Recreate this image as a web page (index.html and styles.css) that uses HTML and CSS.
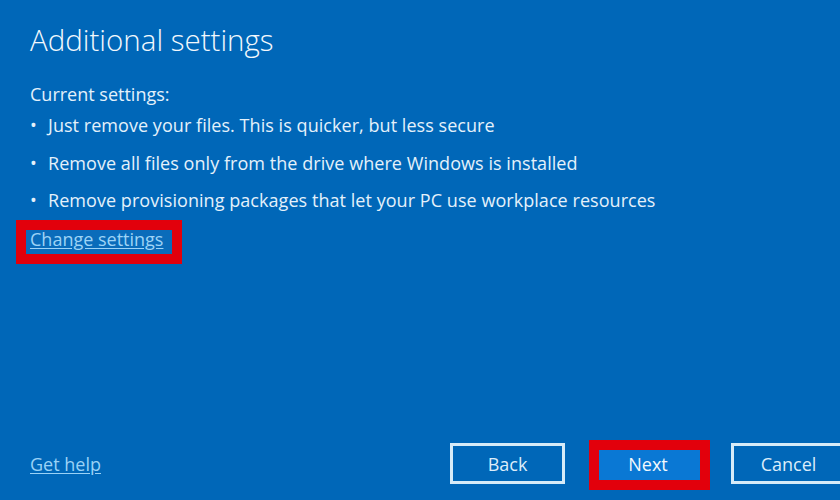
FILE: index.html
```html
<!DOCTYPE html>
<html lang="en">
<head>
<meta charset="utf-8">
<title>Additional settings</title>
<link rel="stylesheet" href="styles.css">
</head>
<body>
<div class="page">
  <h1 class="title">Additional settings</h1>
  <p class="label">Current settings:</p>
  <ul class="list">
    <li>Just remove your files. This is quicker, but less secure</li>
    <li>Remove all files only from the drive where Windows is installed</li>
    <li>Remove provisioning packages that let your PC use workplace resources</li>
  </ul>
  <div class="change-row">
    <a class="link change" href="#">Change settings<span class="mark mark-change"></span></a>
  </div>
  <div class="footer">
    <a class="link help" href="#">Get help</a>
    <div class="buttons">
      <button class="btn">Back</button>
      <button class="btn primary">Next<span class="mark mark-next"></span></button>
      <button class="btn">Cancel</button>
    </div>
  </div>
</div>
</body>
</html>
```

FILE: styles.css
```css
html, body {
  margin: 0;
  padding: 0;
}
body {
  width: 840px;
  height: 500px;
  overflow: hidden;
  background: #0067b8;
  font-family: "Open Sans", "Noto Sans", sans-serif;
  color: #e4f1fb;
}
.page {
  box-sizing: border-box;
  height: 500px;
  padding: 20px 0 16px 30px;
  display: flex;
  flex-direction: column;
}
.title {
  margin: 0;
  font-size: 29.5px;
  font-weight: 300;
  line-height: 40px;
  color: #f2f8fd;
}
.label {
  margin: 22px 0 0;
  font-size: 18px;
  line-height: 24px;
}
.list {
  margin: 1px 0 0;
  padding: 0;
  list-style: none;
  font-size: 18px;
  line-height: 37.5px;
  letter-spacing: 0.05px;
}
.list li {
  display: flex;
}
.list li::before {
  content: "\2022";
  width: 18px;
  flex: none;
}
.change-row {
  margin-top: 1px;
  font-size: 18px;
  line-height: 37.5px;
}
.link {
  color: #9ad2f6;
  text-decoration: underline;
  text-underline-offset: 2px;
}
.change {
  position: relative;
  display: inline-block;
}
.mark {
  position: absolute;
  box-sizing: border-box;
  border: 10px solid #e2000c;
  pointer-events: none;
}
.mark-change {
  left: -14px;
  top: -1px;
  width: 166px;
  height: 44px;
  background: rgba(255, 255, 255, 0.04);
}
.footer {
  margin-top: auto;
  margin-right: -6px;
  display: flex;
  align-items: center;
  justify-content: space-between;
  font-size: 18px;
}
.buttons {
  display: flex;
  gap: 25.5px;
}
.btn {
  position: relative;
  box-sizing: border-box;
  width: 115px;
  height: 41px;
  padding: 0;
  border: 3px solid #d6ebf8;
  background: transparent;
  color: #dcedfa;
  font-family: "Open Sans", "Noto Sans", sans-serif;
  font-size: 18px;
}
.btn.primary {
  background: #0a78d4;
  border-color: #0a78d4;
  color: #f2f8fd;
}
.mark-next {
  left: -5px;
  top: -6px;
  width: 121px;
  height: 50px;
}
```
